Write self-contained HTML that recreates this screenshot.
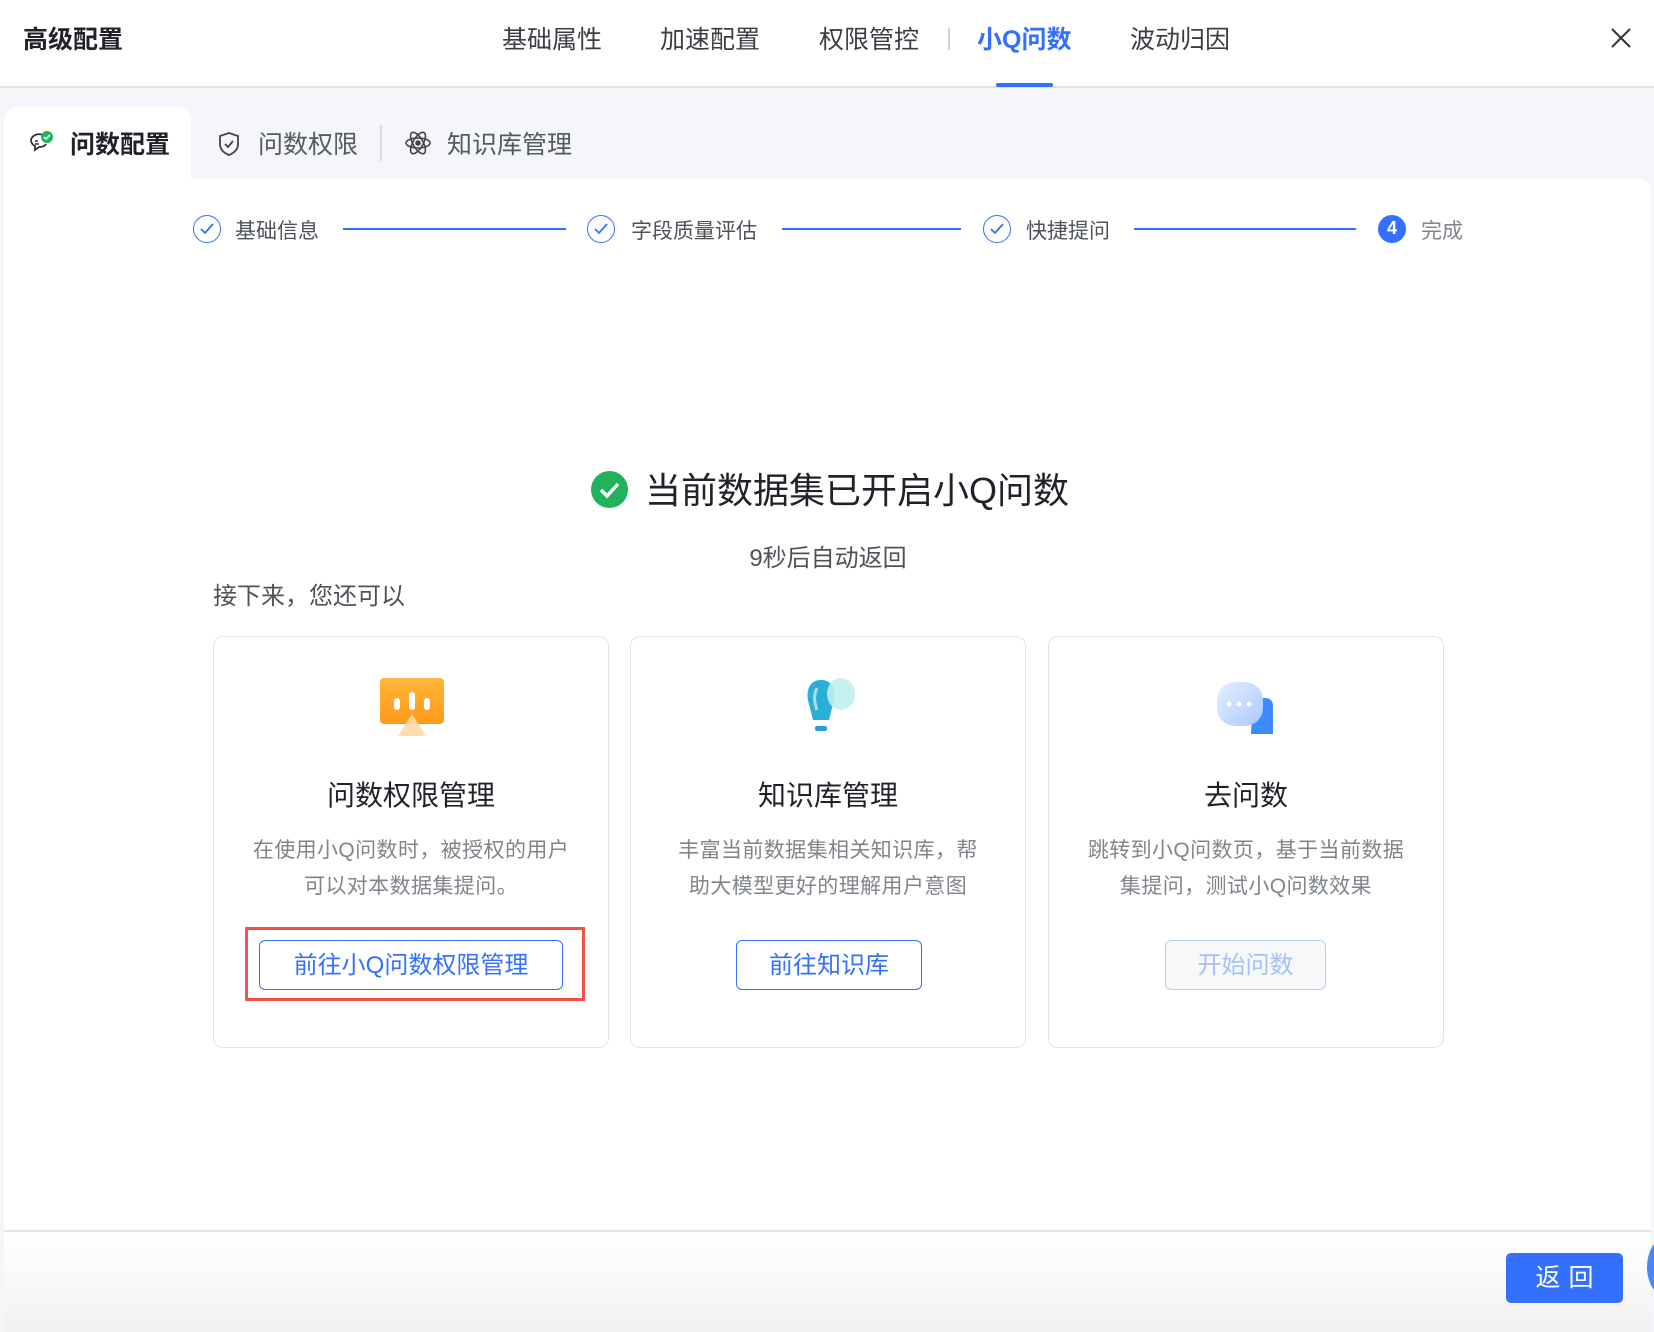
<!DOCTYPE html>
<html><head><meta charset="utf-8"><style>
*{margin:0;padding:0;box-sizing:border-box}
body{width:1654px;height:1332px;overflow:hidden;background:#fff;font-family:"Liberation Sans","Noto Sans CJK SC",sans-serif;color:#1f2329;position:relative}
.a{position:absolute;white-space:nowrap}
.hdr{position:absolute;left:0;top:0;width:1654px;height:88px;border-bottom:2px solid #e1e2e6;background:#fff}
.tt{font-size:25px;color:#3b3f45;top:20px}
.gray{position:absolute;left:0;top:88px;width:1654px;height:1244px;background:#f5f6fa}
.panel{position:absolute;left:4px;top:179px;width:1647px;height:1153px;background:#fff;border-radius:0 12px 0 0}
.acttab{position:absolute;left:4px;top:107px;width:187px;height:80px;background:#fff;border-radius:14px 14px 0 0}
.sub{font-size:25px;color:#555a61;top:125px}
.circ{position:absolute;width:28px;height:28px;border-radius:50%;border:1.5px solid #3370ff;top:215px}
.stx{font-size:21px;color:#4e5359;top:215px}
.ln{position:absolute;height:2px;background:#3370ff;top:228px}
.card{position:absolute;top:636px;width:396px;height:412px;border:1.5px solid #e3e4e8;border-radius:10px;background:#fff}
.ct{position:absolute;left:0;right:0;top:137px;text-align:center;font-size:28px;color:#1f2329}
.cd{position:absolute;left:0;right:0;top:196px;text-align:center;font-size:21px;letter-spacing:0.4px;color:#80858c;line-height:36px}
.btn{position:absolute;top:303px;height:50px;border:1.5px solid #3370ff;border-radius:6px;color:#3370ff;font-size:24px;text-align:center;line-height:50px}
</style></head><body>
<div class="hdr"></div>
<div class="a" style="left:23px;top:20px;font-size:25px;font-weight:bold;color:#1f2329">高级配置</div>
<div class="a tt" style="left:502px">基础属性</div>
<div class="a tt" style="left:660px">加速配置</div>
<div class="a tt" style="left:819px">权限管控</div>
<div class="a" style="left:948px;top:28px;width:1.5px;height:22px;background:#d0d3d8"></div>
<div class="a tt" style="left:977px;color:#3370ff;font-weight:bold">小Q问数</div>
<div class="a tt" style="left:1130px">波动归因</div>
<div class="a" style="left:996px;top:83px;width:57px;height:4px;background:#3370ff;border-radius:2px"></div>
<svg class="a" style="left:1610px;top:27px" width="22" height="22" viewBox="0 0 22 22"><path d="M2 2L20 20M20 2L2 20" stroke="#333" stroke-width="2"/></svg>

<div class="gray"></div>
<div class="panel"></div>
<div class="acttab"></div>
<svg class="a" style="left:27px;top:129px" width="28" height="28" viewBox="0 0 28 28"><path d="M4 11a8 7 0 0 1 15-2M4 11c0 3 2 5 4 6l0 4 4-3c3 0 6-1 7-3" fill="none" stroke="#333" stroke-width="1.8"/><path d="M8 12h3M8 15h4" stroke="#333" stroke-width="1.5"/><circle cx="20" cy="8" r="6" fill="#21b35c"/><path d="M17 8l2 2 4-4" stroke="#fff" stroke-width="1.6" fill="none"/></svg>
<div class="a sub" style="left:70px;color:#1f2329;font-weight:bold">问数配置</div>
<svg class="a" style="left:217px;top:131px" width="24" height="26" viewBox="0 0 24 26"><path d="M12 2L21 5v8c0 6-4 9-9 11C7 22 3 19 3 13V5z" fill="none" stroke="#444" stroke-width="1.8"/><path d="M8 13l3 3 5-6" fill="none" stroke="#444" stroke-width="1.8"/></svg>
<div class="a sub" style="left:258px">问数权限</div>
<div class="a" style="left:380px;top:125px;width:2px;height:36px;background:#d8dade"></div>
<svg class="a" style="left:404px;top:129px" width="28" height="28" viewBox="0 0 28 28" fill="none" stroke="#444" stroke-width="1.6"><ellipse cx="14" cy="14" rx="12" ry="5"/><ellipse cx="14" cy="14" rx="12" ry="5" transform="rotate(60 14 14)"/><ellipse cx="14" cy="14" rx="12" ry="5" transform="rotate(-60 14 14)"/><circle cx="14" cy="14" r="2" fill="#444"/></svg>
<div class="a sub" style="left:447px">知识库管理</div>

<div class="circ" style="left:193px"></div><svg class="a" style="left:200px;top:222px" width="14" height="14"><path d="M1 7l4 4 8-9" fill="none" stroke="#3370ff" stroke-width="1.8"/></svg>
<div class="a stx" style="left:235px">基础信息</div>
<div class="ln" style="left:343px;width:223px"></div>
<div class="circ" style="left:587px"></div><svg class="a" style="left:594px;top:222px" width="14" height="14"><path d="M1 7l4 4 8-9" fill="none" stroke="#3370ff" stroke-width="1.8"/></svg>
<div class="a stx" style="left:631px">字段质量评估</div>
<div class="ln" style="left:782px;width:179px"></div>
<div class="circ" style="left:983px"></div><svg class="a" style="left:990px;top:222px" width="14" height="14"><path d="M1 7l4 4 8-9" fill="none" stroke="#3370ff" stroke-width="1.8"/></svg>
<div class="a stx" style="left:1026px">快捷提问</div>
<div class="ln" style="left:1134px;width:222px"></div>
<div class="circ" style="left:1378px;background:#3370ff;color:#fff;font-size:18px;text-align:center;line-height:25px;font-weight:bold">4</div>
<div class="a stx" style="left:1421px;color:#80858c">完成</div>

<svg class="a" style="left:591px;top:471px" width="37" height="37" viewBox="0 0 37 37"><circle cx="18.5" cy="18.5" r="18.5" fill="#21b35c"/><path d="M10 19l6 6 11-12" fill="none" stroke="#fff" stroke-width="3.5"/></svg>
<div class="a" style="left:645px;top:462px;font-size:36px;color:#1f2329">当前数据集已开启小Q问数</div>
<div class="a" style="left:0;width:1656px;text-align:center;top:538px;font-size:24px;color:#4e5359">9秒后自动返回</div>
<div class="a" style="left:213px;top:576px;font-size:24px;color:#4e5359">接下来，您还可以</div>

<div class="card" style="left:213px">
<svg class="a" style="left:166px;top:39px" width="64" height="64" viewBox="0 0 64 64"><defs><linearGradient id="o" x1="0" y1="0" x2="0" y2="1"><stop offset="0" stop-color="#ffb53d"/><stop offset="1" stop-color="#ff9a17"/></linearGradient></defs><rect x="0" y="2" width="64" height="46" rx="4" fill="url(#o)"/><rect x="14" y="22" width="6" height="12" rx="3" fill="#fff"/><rect x="29" y="16" width="6" height="18" rx="3" fill="#fff"/><rect x="44" y="22" width="6" height="12" rx="3" fill="#fff"/><path d="M32 38L46 60H18z" fill="#ffd9a8" opacity=".9"/></svg>
<div class="ct">问数权限管理</div>
<div class="cd">在使用小Q问数时，被授权的用户<br>可以对本数据集提问。</div>
<div class="a" style="left:31px;top:290px;width:340px;height:74px;border:3px solid #f2524a"></div>
<div class="btn" style="left:45px;width:304px">前往小Q问数权限管理</div>
</div>
<div class="card" style="left:630px">
<svg class="a" style="left:170px;top:39px" width="56" height="64" viewBox="0 0 56 64"><path d="M20 4c-12 0-16 12-12 24l4 16h16l4-16C36 16 32 4 20 4z" fill="#2ab0d6"/><rect x="14" y="50" width="12" height="5" rx="2" fill="#2a9fd6"/><ellipse cx="40" cy="18" rx="14" ry="16" fill="#bfeff0" opacity=".9"/><path d="M16 12c-3 6-3 14 0 22" stroke="#fff" stroke-width="3" fill="none" opacity=".6"/></svg>
<div class="ct">知识库管理</div>
<div class="cd">丰富当前数据集相关知识库，帮<br>助大模型更好的理解用户意图</div>
<div class="btn" style="left:105px;width:186px">前往知识库</div>
</div>
<div class="card" style="left:1048px">
<svg class="a" style="left:166px;top:39px" width="64" height="64" viewBox="0 0 64 64"><defs><linearGradient id="b" x1="0" y1="0" x2="1" y2="1"><stop offset="0" stop-color="#e6f0ff"/><stop offset="1" stop-color="#a9c8ff"/></linearGradient></defs><path d="M38 22h12c6 0 8 4 8 8v28H36z" fill="#3d8bff"/><rect x="2" y="6" width="46" height="44" rx="18" fill="url(#b)"/><circle cx="14" cy="28" r="2.5" fill="#fff"/><circle cx="24" cy="28" r="2.5" fill="#fff"/><circle cx="34" cy="28" r="2.5" fill="#fff"/></svg>
<div class="ct">去问数</div>
<div class="cd">跳转到小Q问数页，基于当前数据<br>集提问，测试小Q问数效果</div>
<div class="btn" style="left:116px;width:161px;border-color:#b8cdfa;color:#a5bff7;background:#f7f8fa">开始问数</div>
</div>

<div class="a" style="left:4px;top:1230px;width:1647px;height:2px;background:#e3e4e8"></div>
<div class="a" style="left:4px;top:1232px;width:1647px;height:100px;background:linear-gradient(#fff,#f2f2f3)"></div>
<div class="a" style="left:1506px;top:1253px;width:117px;height:50px;background:#3370ff;border-radius:5px;color:#fff;font-size:25px;text-align:center;line-height:50px;letter-spacing:8px;padding-left:8px">返回</div>
<div class="a" style="left:1647px;top:1237px;width:40px;height:60px;border-radius:50%;background:#4a86f7"></div>
</body></html>
